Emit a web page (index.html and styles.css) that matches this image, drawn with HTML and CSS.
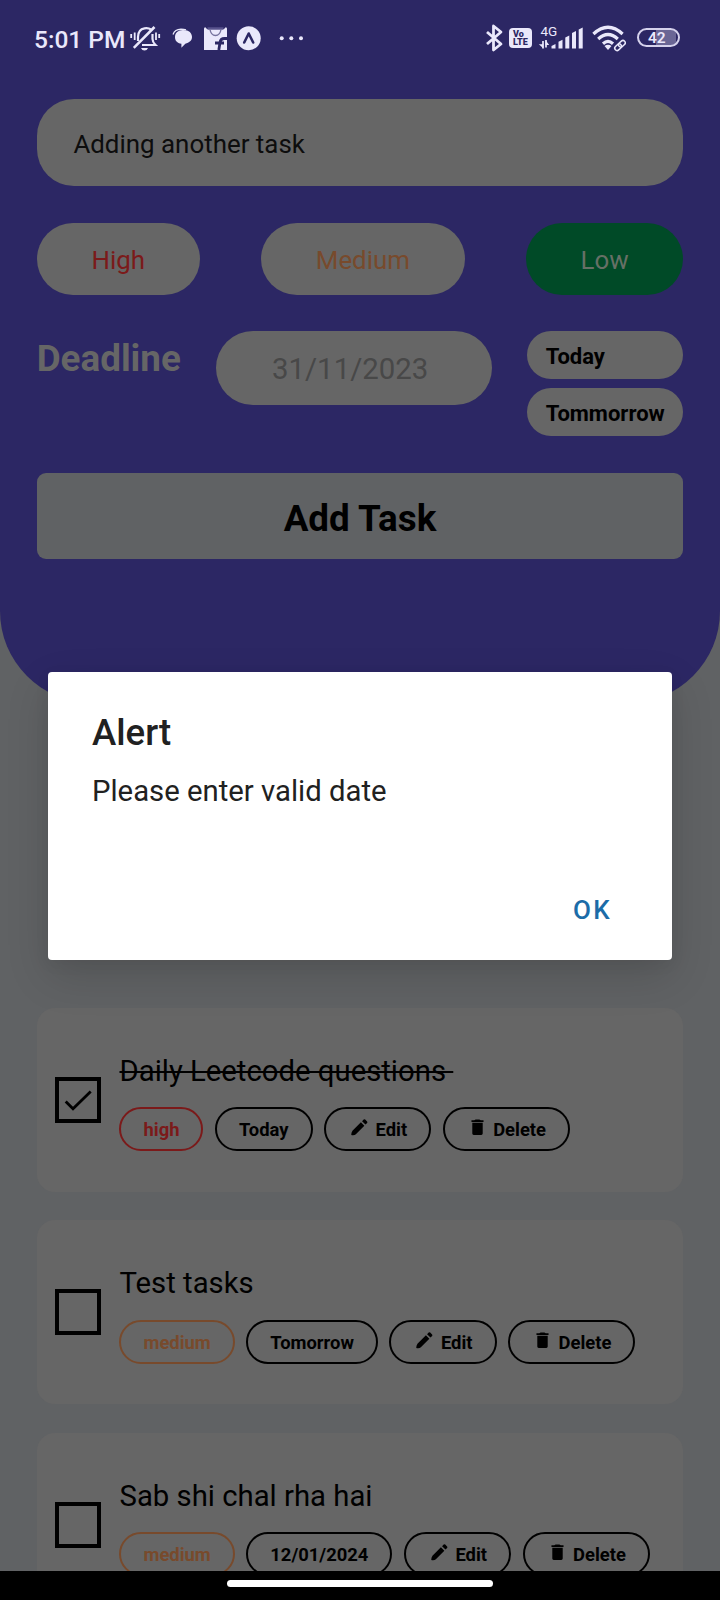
FILE: index.html
```html
<!DOCTYPE html>
<html lang="en">
<head>
<meta charset="utf-8">
<title>Tasks</title>
<link rel="stylesheet" href="styles.css">
</head>
<body>
<svg class="defs" width="0" height="0">
  <symbol id="pencil" viewBox="0 0 20 20"><path d="M1.300 17.800q0-2.700 1.300-4.500L11.500 4.500l3.600 3.600-8.900 9q-2 1.700-4.900.7zM12.700 3.300l1.700-1.700q.8-.7 1.600 0l2 2q.7.800 0 1.600l-1.700 1.700z"/></symbol>
  <symbol id="trash" viewBox="0 0 14 18"><path d="M.5 1.300h3l1.500-1h4l1.500 1h3v1.700H.5zM1.400 4h11.200v11.500q0 1.500-1.500 1.500H2.900q-1.500 0-1.500-1.500z"/></symbol>
</svg>
<div class="screen">
  <header class="header">
    <div class="status">
      <span class="time">5:01 PM</span>
      <svg class="notes" width="180" height="30" viewBox="0 0 180 30">
        <g fill="none" stroke="#eae8fb" stroke-width="2.200">
          <path d="M8 17v-4q0-7.500 6.500-8.700 4-.6 6.500 1.200M22.500 10v5q0 3 3 6H12" />
          <path d="M3.800 23.800L24.500 3" stroke-width="2.600"/>
          <path d="M1.200 10v4M4.700 8.500v7.500M26 8.500v7.500M29.200 10v4" stroke-width="1.800"/>
        </g>
        <path d="M11 24h7q-1 2.600-3.500 2.600T11 24z" fill="#eae8fb"/>
        <path d="M53 6c6.400 0 9 3.300 9 7.100 0 3.500-2.700 5.800-6.700 6.700l-3.900 4v-4c-4.300-.7-6.400-3.200-6.400-6.600 0-4.100 3-7.200 8-7.200z" fill="#eae8fb"/>
        <path d="M43 10.500q1.800-5 8-5.300 3 0 5 .7" fill="none" stroke="#eae8fb" stroke-width="1.300"/>
        <path d="M75 3l2 2h17l2-2 1 1.500V26H74V4.500z" fill="#eae8fb"/>
        <path d="M77.500 4.500h16" stroke="#57528c" stroke-width="2.500"/>
        <path d="M80 5.500q1 6 5.500 6t5.500-6" fill="none" stroke="#77739f" stroke-width="1.400"/>
        <path d="M97 14.500h-2.500q-4 0-4.500 4l-1.200 7.500M85 19h9" fill="none" stroke="#2c2764" stroke-width="2.800"/>
        <circle cx="118.700" cy="14.300" r="12" fill="#eae8fb"/>
        <path d="M114.200 18.500l4.500-9 4.500 9" fill="none" stroke="#2c2764" stroke-width="2.600" stroke-linecap="round" stroke-linejoin="round"/>
        <g fill="#eae8fb"><circle cx="151.700" cy="14.300" r="2"/><circle cx="161.300" cy="14.300" r="2"/><circle cx="171" cy="14.300" r="2"/></g>
      </svg>
      <div class="system">
        <svg class="bt" width="18" height="28" viewBox="0 0 18 28"><path d="M2 8l14 12-7.500 6V2L16 8 2 20" fill="none" stroke="#eae8fb" stroke-width="2.800" stroke-linejoin="round"/></svg>
        <div class="volte"><span>Vo</span><span>LTE</span></div>
        <div class="cell">
          <span class="gen">4G</span>
          <svg width="46" height="24" viewBox="0 0 46 24">
            <path d="M5 15v7.500M8 21.500V14" stroke="#eae8fb" stroke-width="1.700"/><path d="M.8 18.300h4.500v4zM7.500 14v5h3.700z" fill="#eae8fb"/>
            <path d="M13.500 22.500v-2.500l4-2v4.500zM20.500 22.500v-6.800l4-2v8.800zM27.300 22.500V11.500l4-2v13zM34 22.500V7l4-2v17.500zM40.700 22.500V3.500l4-2v21z" fill="#eae8fb"/>
          </svg>
        </div>
        <svg class="wifi" width="34" height="28" viewBox="0 0 34 28">
          <g fill="none" stroke="#eae8fb" stroke-width="3.200"><path d="M1.400 9q14.600-13.500 29.200 0M6.200 14q9.800-9 19.600 0M11 18.700q5-4.500 10 0"/></g>
          <path d="M12.500 21q3.500-2.500 7 0L16 25z" fill="#eae8fb"/>
          <path d="M23 23l8-6" fill="none" stroke="#2c2764" stroke-width="7"/>
          <g fill="none" stroke="#eae8fb" stroke-width="1.500" transform="rotate(-43 28 20.500)"><rect x="21.700" y="18.200" width="7.500" height="4.600" rx="2.300"/><rect x="26.800" y="18.200" width="7.500" height="4.600" rx="2.300"/></g>
        </svg>
        <div class="battery">42</div>
      </div>
    </div>
    <div class="form">
      <div class="input">Adding another task</div>
      <div class="priorities">
        <div class="prio high">High</div>
        <div class="prio medium">Medium</div>
        <div class="prio low">Low</div>
      </div>
      <div class="deadline">
        <h2 class="label">Deadline</h2>
        <div class="date">31/11/2023</div>
        <div class="quick"><div class="day">Today</div><div class="day">Tommorrow</div></div>
      </div>
      <div class="add">Add Task</div>
    </div>
  </header>
  <main class="list">
    <article class="card">
      <div class="check"><svg width="38" height="38" viewBox="0 0 38 38"><path d="M6.700 20.500l7.300 7.300L31.700 10.500" fill="none" stroke="#000" stroke-width="2.800"/></svg></div>
      <div class="body">
        <div class="title done">Daily Leetcode questions </div>
        <div class="chips">
          <span class="chip red">high</span><span class="chip">Today</span>
          <span class="chip act"><svg class="pencil"><use href="#pencil"/></svg>Edit</span>
          <span class="chip act"><svg class="trash"><use href="#trash"/></svg>Delete</span>
        </div>
      </div>
    </article>
    <article class="card">
      <div class="check"></div>
      <div class="body">
        <div class="title">Test tasks</div>
        <div class="chips">
          <span class="chip orange">medium</span><span class="chip">Tomorrow</span>
          <span class="chip act"><svg class="pencil"><use href="#pencil"/></svg>Edit</span>
          <span class="chip act"><svg class="trash"><use href="#trash"/></svg>Delete</span>
        </div>
      </div>
    </article>
    <article class="card">
      <div class="check"></div>
      <div class="body">
        <div class="title">Sab shi chal rha hai</div>
        <div class="chips">
          <span class="chip orange">medium</span><span class="chip">12/01/2024</span>
          <span class="chip act"><svg class="pencil"><use href="#pencil"/></svg>Edit</span>
          <span class="chip act"><svg class="trash"><use href="#trash"/></svg>Delete</span>
        </div>
      </div>
    </article>
  </main>
  <section class="dialog">
    <h1 class="dialog-title">Alert</h1>
    <p class="dialog-text">Please enter valid date</p>
    <div class="dialog-ok">OK</div>
  </section>
  <nav class="navbar"><div class="handle"></div></nav>
</div>
</body>
</html>
```
FILE: styles.css
```css
* { box-sizing: border-box; }
body { margin: 0; font-family: Roboto, "Liberation Sans", sans-serif; color: #000; }
.defs { display: block; position: absolute; }
.screen { position: relative; width: 720px; height: 1600px; overflow: hidden; background: #606264; }

.header { height: 703px; background: #2c2764; border-radius: 0 0 92px 92px; }
.status { height: 99px; padding: 24px 40px 0 34px; display: flex; align-items: flex-start; color: #eae8fb; }
.time { width: 96px; font-size: 24.5px; line-height: 31px; font-weight: 500; white-space: nowrap; }
.notes { flex: none; }
.system { margin-left: auto; display: flex; align-items: flex-start; }
.bt { margin-right: 6px; }
.volte { width: 23px; height: 20px; margin: 4px 6px 0 0; padding: 2px 0 0 4px; border-radius: 4px; background: #eae8fb; color: #2c2764; font-size: 9px; line-height: 8px; font-weight: 900; display: flex; flex-direction: column; }
.cell { position: relative; width: 46px; height: 28px; margin-right: 8px; padding-top: 2px; }
.gen { position: absolute; left: 2.500px; top: 0; font-size: 13.5px; line-height: 15px; }
.wifi { margin-right: 11px; margin-top: 1px; }
.battery { width: 43px; height: 19px; margin-top: 4px; border: 2px solid #d5d2ec; border-radius: 10px; background: linear-gradient(90deg, #2c2764 17px, #6a6695 17px 37px, #2c2764 37px); font-size: 15.5px; line-height: 17px; font-weight: 600; padding-left: 9px; }

.form { padding: 0 36.700px; }
.input { height: 87px; border-radius: 37px; background: #666; padding-left: 36.700px; font-size: 25.900px; line-height: 90px; color: #0d0d0d; }
.priorities { margin-top: 37px; display: flex; justify-content: space-between; }
.prio { height: 72px; border-radius: 36px; background: #666; text-align: center; font-size: 25.900px; line-height: 75px; }
.high { width: 163.300px; color: #7b1a1a; }
.medium { width: 204.200px; color: #784a2c; }
.low { width: 157.500px; background: #004a27; color: #667066; }
.deadline { margin-top: 36px; height: 105px; display: flex; align-items: flex-start; justify-content: space-between; }
.label { width: 145px; margin: 6px 0 0; font-size: 36.800px; line-height: 43px; font-weight: 700; color: #666; }
.date { width: 275.500px; height: 74px; border-radius: 37px; background: #666; padding-right: 8px; text-align: center; font-size: 29.400px; line-height: 77px; color: #484848; }
.quick { width: 156.700px; display: grid; gap: 9px; }
.day { height: 48px; border-radius: 24px; background: #666; padding-left: 19px; font-size: 22px; line-height: 52px; font-weight: 700; }
.add { margin-top: 37px; height: 85.500px; border-radius: 9px; background: #606264; text-align: center; font-size: 36.800px; line-height: 92px; font-weight: 700; }

.list { padding: 304.500px 36.700px 0; display: grid; gap: 28.700px; }
.card { height: 184px; padding-left: 18.300px; border-radius: 18px; background: #666; display: flex; }
.check { width: 46px; height: 46px; margin-top: 69px; border: 4px solid #000; flex: none; }
.check svg { display: block; }
.body { margin-left: 18.500px; padding-top: 44px; }
.title { font-size: 29.300px; line-height: 38px; height: 55.500px; white-space: pre; width: max-content; }
.done { text-decoration: line-through; text-decoration-thickness: 2px; }
.chips { display: flex; gap: 11.500px; }
.chip { height: 44px; padding: 0 22px; border: 2px solid #000; border-radius: 22px; font-size: 18.400px; line-height: 42px; font-weight: 700; white-space: nowrap; }
.red { color: #7b1a1a; border-color: #7b1a1a; }
.orange { color: #784a2c; border-color: #784a2c; }
.act { display: flex; align-items: flex-start; fill: #000; }
.pencil { width: 19px; height: 19px; margin: 9px 6.500px 0 2px; }
.trash { width: 13px; height: 17px; margin: 10px 9.500px 0 4px; }

.dialog { position: absolute; left: 48px; top: 672px; width: 624px; height: 288px; border-radius: 4px; background: #fff; padding: 37px 44px; box-shadow: 0 16px 44px rgba(0,0,0,.14), 0 4px 16px rgba(0,0,0,.05); }
.dialog-title { margin: 0; font-size: 36.600px; line-height: 48px; font-weight: 500; color: #212121; }
.dialog-text { margin: 15px 0 0; font-size: 29.300px; line-height: 38px; color: #212121; }
.dialog-ok { margin: 80px 16px 0 0; text-align: right; font-size: 26px; line-height: 40px; font-weight: 500; letter-spacing: 2.300px; color: #1c6ca8; }
.navbar { position: absolute; left: 0; right: 0; bottom: 0; height: 29.300px; background: #000; padding-top: 9px; }
.handle { width: 266px; height: 7px; margin: 0 auto; border-radius: 4px; background: #fff; }
```
